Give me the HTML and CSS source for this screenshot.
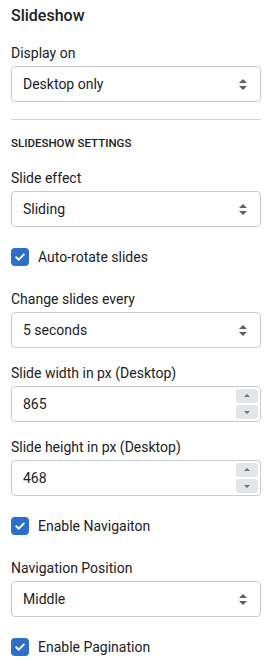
FILE: index.html
```html
<!DOCTYPE html>
<html lang="en">
<head>
<meta charset="utf-8">
<title>Slideshow settings</title>
<link rel="stylesheet" href="styles.css">
</head>
<body>
<div class="panel">
  <h2 class="title">Slideshow</h2>

  <div class="field">
    <label class="label">Display on</label>
    <div class="select"><span>Desktop only</span><span class="arrows"></span></div>
  </div>

  <hr class="divider">

  <h3 class="section">SLIDESHOW SETTINGS</h3>

  <div class="field">
    <label class="label">Slide effect</label>
    <div class="select"><span>Sliding</span><span class="arrows"></span></div>
  </div>

  <div class="check"><span class="box"><svg viewBox="0 0 18 18" width="18" height="18"><path d="M5.2 9.2l2.6 2.5 5-5.2" fill="none" stroke="#fff" stroke-width="1.9" stroke-linecap="round" stroke-linejoin="round"/></svg></span><span>Auto-rotate slides</span></div>

  <div class="field">
    <label class="label">Change slides every</label>
    <div class="select"><span>5 seconds</span><span class="arrows"></span></div>
  </div>

  <div class="field">
    <label class="label">Slide width in px (Desktop)</label>
    <div class="number"><span>865</span><span class="spin"><span class="btn up"></span><span class="btn down"></span></span></div>
  </div>

  <div class="field">
    <label class="label">Slide height in px (Desktop)</label>
    <div class="number"><span>468</span><span class="spin"><span class="btn up"></span><span class="btn down"></span></span></div>
  </div>

  <div class="check"><span class="box"><svg viewBox="0 0 18 18" width="18" height="18"><path d="M5.2 9.2l2.6 2.5 5-5.2" fill="none" stroke="#fff" stroke-width="1.9" stroke-linecap="round" stroke-linejoin="round"/></svg></span><span>Enable Navigaiton</span></div>

  <div class="field">
    <label class="label">Navigation Position</label>
    <div class="select"><span>Middle</span><span class="arrows"></span></div>
  </div>

  <div class="check"><span class="box"><svg viewBox="0 0 18 18" width="18" height="18"><path d="M5.2 9.2l2.6 2.5 5-5.2" fill="none" stroke="#fff" stroke-width="1.9" stroke-linecap="round" stroke-linejoin="round"/></svg></span><span>Enable Pagination</span></div>
</div>
</body>
</html>
```

FILE: styles.css
```css
html, body {
  margin: 0;
  padding: 0;
  background: #ffffff;
}
body {
  font-family: Roboto, "Noto Sans", sans-serif;
  font-size: 14px;
  color: #202223;
}
.panel {
  padding: 4px 13px 0 11px;
  display: flex;
  flex-direction: column;
}
.title {
  margin: 0;
  font-size: 16px;
  line-height: 24px;
  font-weight: 500;
}
.field {
  display: flex;
  flex-direction: column;
  margin-top: 15px;
}
.check + .field {
  margin-top: 22px;
}
.label {
  line-height: 20px;
  margin-bottom: 3px;
}
.select, .number {
  height: 36px;
  box-sizing: border-box;
  border: 1px solid #c9cccf;
  border-radius: 4px;
  display: flex;
  align-items: center;
  justify-content: space-between;
  padding: 0 13px 0 11px;
}
.arrows {
  position: relative;
  width: 8px;
  height: 11px;
}
.arrows::before, .arrows::after {
  content: "";
  position: absolute;
  left: 0;
  border-left: 4px solid transparent;
  border-right: 4px solid transparent;
}
.arrows::before {
  top: 0;
  border-bottom: 4px solid #5c5f62;
}
.arrows::after {
  bottom: 0;
  border-top: 4px solid #5c5f62;
}
.number {
  padding-right: 2px;
}
.spin {
  display: flex;
  flex-direction: column;
  gap: 2px;
}
.btn {
  width: 22px;
  height: 14px;
  background: #e4e5e7;
  border-radius: 3px;
  position: relative;
}
.btn::after {
  content: "";
  position: absolute;
  left: 8px;
  border-left: 3px solid transparent;
  border-right: 3px solid transparent;
}
.btn.up::after {
  top: 5px;
  border-bottom: 3px solid #6d7175;
}
.btn.down::after {
  top: 6px;
  border-top: 3px solid #6d7175;
}
.divider {
  border: 0;
  border-top: 1px solid #d2d5d8;
  margin: 17px 0 0;
}
.section {
  margin: 13px 0 0;
  font-size: 11.5px;
  line-height: 20px;
  font-weight: 500;
}
.check {
  display: flex;
  align-items: center;
  gap: 9px;
  margin-top: 20px;
  line-height: 20px;
}
.box {
  width: 18px;
  height: 18px;
  border-radius: 4px;
  background: #2c6ecb;
  display: flex;
}
```
